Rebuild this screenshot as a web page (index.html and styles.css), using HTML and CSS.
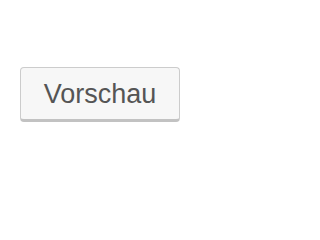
FILE: index.html
```html
<!DOCTYPE html>
<html>
<head>
<meta charset="utf-8">
<link rel="stylesheet" href="styles.css">
</head>
<body>
<div class="wrap">
  <button class="btn">Vorschau</button>
</div>
</body>
</html>
```
FILE: styles.css
```css
html, body {
  margin: 0;
  padding: 0;
  background: #ffffff;
}
.wrap {
  padding: 67px 0 0 20px;
}
.btn {
  box-sizing: border-box;
  width: 160px;
  height: 55px;
  margin: 0;
  padding: 2px 0 0 0;
  border: 1px solid #cccccc;
  border-bottom: 3px solid #c2c2c2;
  border-radius: 4px;
  background: #f7f7f7;
  color: #555555;
  font-family: "Liberation Sans", Arial, sans-serif;
  font-size: 27px;
  line-height: 1;
  cursor: pointer;
  -webkit-appearance: none;
  appearance: none;
}
```
